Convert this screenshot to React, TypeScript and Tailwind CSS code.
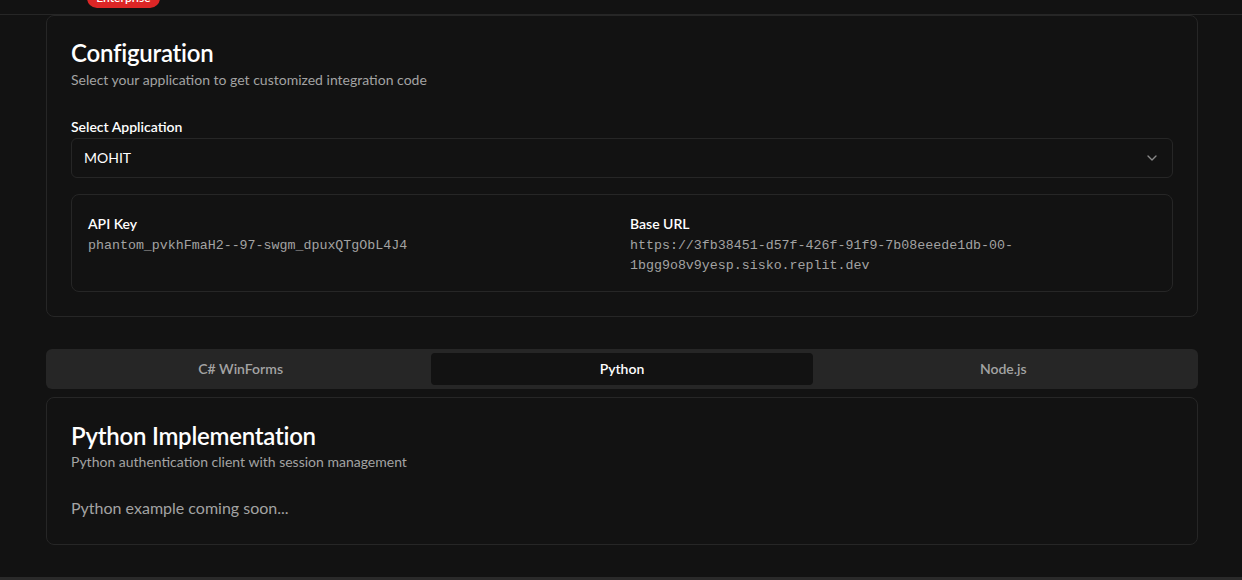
import { ChevronDown } from "lucide-react";

const tabs = ["C# WinForms", "Python", "Node.js"];

export default function App() {
  const active = "Python";

  return (
    <div className="min-h-screen bg-[#121212] text-white font-['Lato',sans-serif] overflow-hidden">
      {/* header, scrolled mostly out of view */}
      <header className="-mt-[50px] h-[65px] border-b border-[#262626] flex items-end pb-[6px]">
        <div className="ml-[87px] w-[73px] h-[20px] rounded-full bg-[#dc2626] text-xs font-semibold flex items-center justify-center">
          Enterprise
        </div>
      </header>

      <main className="pl-[46px] pr-[44px] pb-8">
        {/* configuration card */}
        <section className="rounded-lg border border-[#262626] bg-[#121212]">
          <div className="p-6 pt-[25px] flex flex-col gap-[5px]">
            <h2 className="text-2xl font-semibold leading-none tracking-[-0.01em]">
              Configuration
            </h2>
            <p className="text-sm text-[#a3a3a3]">
              Select your application to get customized integration code
            </p>
          </div>
          <div className="px-6 pb-6 pt-[6px]">
            <label className="block text-sm font-semibold leading-none">
              Select Application
            </label>
            <div className="mt-1 h-10 rounded-md border border-[#262626] px-3 flex items-center justify-between text-sm">
              <span>MOHIT</span>
              <ChevronDown className="w-4 h-4 opacity-50" />
            </div>

            <div className="mt-4 rounded-lg border border-[#262626] px-4 pt-[22px] pb-[15px] grid grid-cols-2 gap-4">
              <div>
                <div className="text-sm font-semibold leading-none">API Key</div>
                <div className="mt-[5px] font-['Liberation_Mono',monospace] text-[13.3px] leading-5 text-[#a3a3a3]">
                  phantom_pvkhFmaH2--97-swgm_dpuxQTgObL4J4
                </div>
              </div>
              <div>
                <div className="text-sm font-semibold leading-none">Base URL</div>
                <div className="mt-[5px] font-['Liberation_Mono',monospace] text-[13.3px] leading-5 text-[#a3a3a3]">
                  https://3fb38451-d57f-426f-91f9-7b08eeede1db-00-1bgg9o8v9yesp.sisko.replit.dev
                </div>
              </div>
            </div>
          </div>
        </section>

        {/* language tabs */}
        <div className="mt-8 h-10 rounded-md bg-[#262626] p-1 grid grid-cols-3">
          {tabs.map((t) => (
            <button
              key={t}
              className={`rounded-sm text-sm font-semibold ${
                t === active ? "bg-[#121212] text-white" : "text-[#a3a3a3]"
              }`}
            >
              {t}
            </button>
          ))}
        </div>

        <section className="mt-2 rounded-lg border border-[#262626] bg-[#121212]">
          <div className="p-6 pt-[26px] flex flex-col gap-1">
            <h2 className="text-2xl font-semibold leading-none tracking-[-0.01em]">
              Python Implementation
            </h2>
            <p className="text-sm text-[#a3a3a3]">
              Python authentication client with session management
            </p>
          </div>
          <div className="px-6 pb-6">
            <p className="text-[#a3a3a3]">Python example coming soon...</p>
          </div>
        </section>
      </main>

      <footer className="border-t-[3px] border-[#2a2a2a] h-20" />
    </div>
  );
}
